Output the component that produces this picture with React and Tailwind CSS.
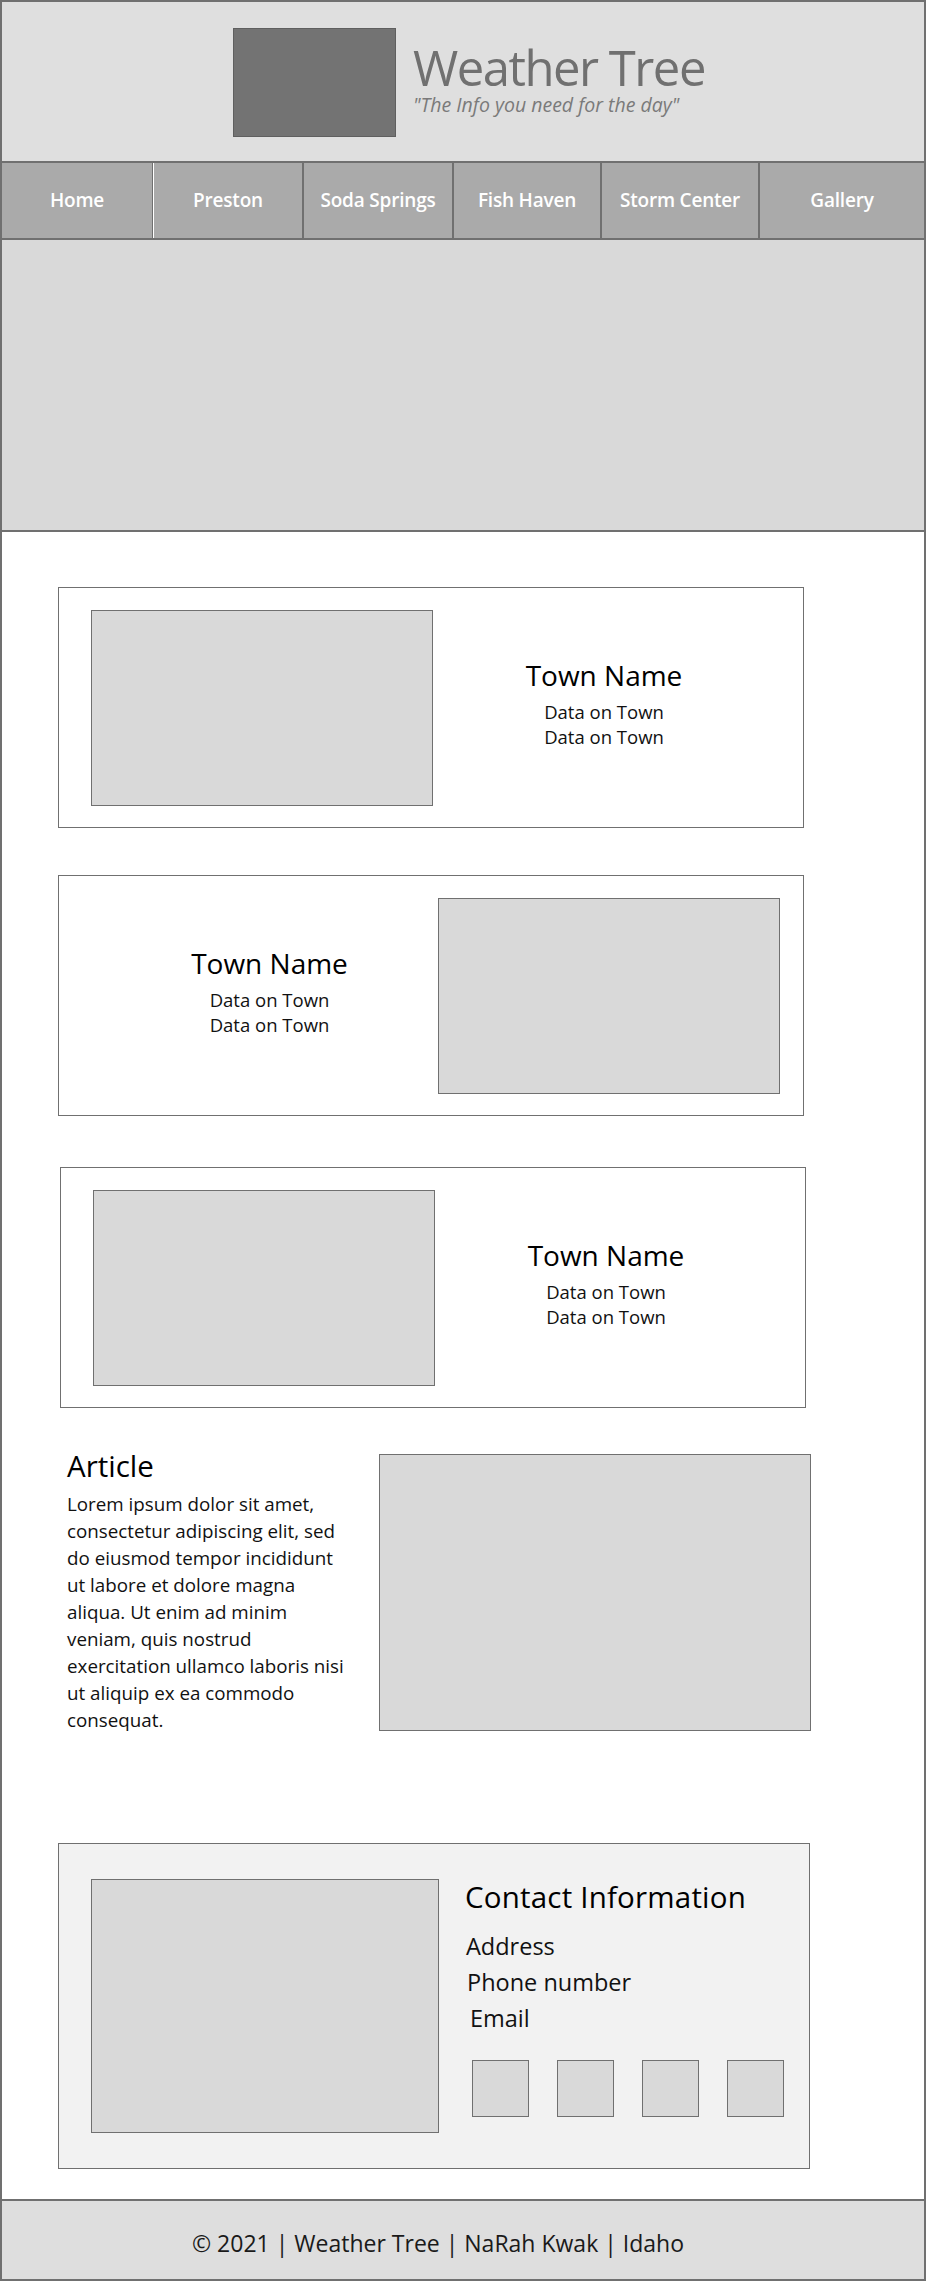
const navItems = [
  { label: "Home", w: "w-[151px]", border: "border-r border-[#707070]" },
  { label: "Preston", w: "w-[151px]", border: "border-l border-l-white border-r-2 border-r-[#707070]" },
  { label: "Soda Springs", w: "w-[150px]", border: "border-r-2 border-[#707070]" },
  { label: "Fish Haven", w: "w-[148px]", border: "border-r-2 border-[#707070]" },
  { label: "Storm Center", w: "w-[158px]", border: "border-r-2 border-[#707070]" },
  { label: "Gallery", w: "flex-1", border: "" },
];

const articleLines = [
  "Lorem ipsum dolor sit amet,",
  "consectetur adipiscing elit, sed",
  "do eiusmod tempor incididunt",
  "ut labore et dolore magna",
  "aliqua. Ut enim ad minim",
  "veniam, quis nostrud",
  "exercitation ullamco laboris nisi",
  "ut aliquip ex ea commodo",
  "consequat.",
];

function Photo({ className = "" }) {
  return <div className={`shrink-0 border border-[#707070] bg-[#d9d9d9] ${className}`} />;
}

function TownText({ className = "" }) {
  return (
    <div className={`flex flex-1 flex-col items-center pb-[10px] text-center ${className}`}>
      <h2 className="text-[28px] leading-[36px] font-medium text-black">Town Name</h2>
      <p className="mt-[6px] text-[18.5px] leading-[25px] text-[#111]">Data on Town</p>
      <p className="text-[18.5px] leading-[25px] text-[#111]">Data on Town</p>
    </div>
  );
}

function TownCard({ flip = false, className = "" }) {
  return (
    <div
      className={`flex h-[241px] w-[746px] items-center border border-[#707070] bg-white ${className}`}
    >
      {flip ? (
        <>
          <TownText className="pl-[42px]" />
          <Photo className="mr-[23px] h-[196px] w-[342px]" />
        </>
      ) : (
        <>
          <Photo className="ml-[32px] h-[196px] w-[342px]" />
          <TownText className="pr-[28px]" />
        </>
      )}
    </div>
  );
}

export default function App() {
  return (
    <div className="flex h-[2281px] w-[926px] flex-col border-2 border-[#707070] bg-white font-['Open_Sans','Noto_Sans',sans-serif]">
      <header className="flex h-[159px] shrink-0 items-center justify-center bg-[#dfdfdf] pl-[12px]">
        <div className="flex items-start">
          <div className="mt-[1px] h-[109px] w-[163px] border border-[#5f5f5f] bg-[#737373]" />
          <div className="ml-[17px] flex flex-col pt-[16px]">
            <h1 className="text-[49px] leading-[48px] tracking-[-1.5px] text-[#707070]">
              Weather Tree
            </h1>
            <p className="mt-[2px] text-[19.5px] leading-[24px] italic text-[#7a7a7a]">
              "The Info you need for the day"
            </p>
          </div>
        </div>
      </header>

      <nav className="flex h-[79px] shrink-0 border-y-2 border-[#707070] bg-[#aaaaaa]">
        {navItems.map((item) => (
          <a
            key={item.label}
            href="#"
            className={`flex items-center justify-center text-[19px] font-semibold tracking-[-0.2px] text-white ${item.w} ${item.border}`}
          >
            {item.label}
          </a>
        ))}
      </nav>

      <div className="h-[292px] shrink-0 border-b-2 border-[#707070] bg-[#d9d9d9]" />

      <main className="flex flex-1 flex-col pl-[56px] pt-[55px]">
        <TownCard />
        <TownCard flip className="mt-[47px]" />
        <TownCard className="mt-[51px] ml-[2px]" />

        <section className="mt-[39px] flex items-start">
          <div className="ml-[9px] w-[300px]">
            <h2 className="text-[29.5px] leading-[38px] font-medium text-black">Article</h2>
            <p className="mt-[6px] text-[18.8px] leading-[27px] whitespace-nowrap text-[#111]">
              {articleLines.map((line) => (
                <span key={line} className="block">
                  {line}
                </span>
              ))}
            </p>
          </div>
          <Photo className="mt-[7px] ml-[12px] h-[277px] w-[432px]" />
        </section>

        <section className="mt-[109px] flex w-[752px] items-start border border-[#707070] bg-[#f2f2f2] pl-[32px] pt-[35px] pb-[35px]">
          <Photo className="h-[254px] w-[348px]" />
          <div className="ml-[26px] flex shrink-0 flex-col">
            <h2 className="-mt-[2px] text-[29.5px] leading-[40px] font-medium tracking-[0.2px] text-black">
              Contact Information
            </h2>
            <p className="mt-[11px] ml-[1px] text-[23.5px] leading-[36px] text-[#111]">Address</p>
            <p className="ml-[2px] text-[23.5px] leading-[36px] text-[#111]">Phone number</p>
            <p className="ml-[5px] text-[23.5px] leading-[36px] text-[#111]">Email</p>
            <div className="mt-[24px] ml-[7px] flex gap-[28px]">
              {[0, 1, 2, 3].map((i) => (
                <div key={i} className="h-[57px] w-[57px] border border-[#707070] bg-[#d9d9d9]" />
              ))}
            </div>
          </div>
        </section>
      </main>

      <footer className="flex h-[80px] shrink-0 items-center justify-center border-t-2 border-[#707070] bg-[#dedede] pt-[6px] pr-[50px]">
        <p className="text-[23px] text-[#1a1a1a]">© 2021 | Weather Tree | NaRah Kwak | Idaho</p>
      </footer>
    </div>
  );
}
